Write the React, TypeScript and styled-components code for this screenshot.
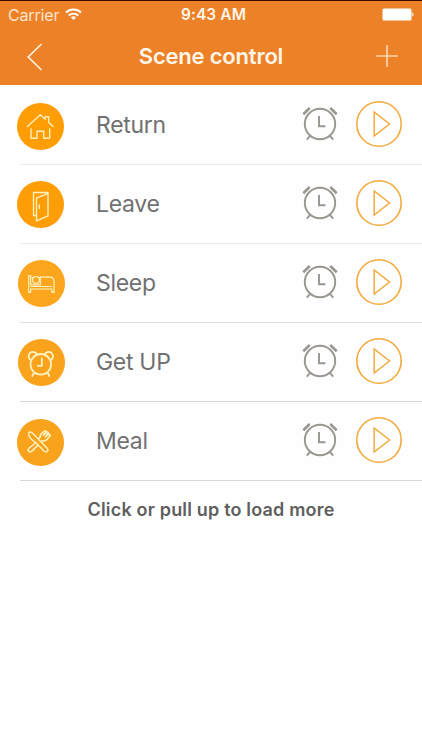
import React from 'react';
import styled, { createGlobalStyle } from 'styled-components';

const GlobalStyle = createGlobalStyle`
  * { box-sizing: border-box; }
  body { margin: 0; background: #fefefe; font-family: Inter, "Liberation Sans", sans-serif; }
  svg { display: block; flex: none; }
`;

const Screen = styled.main`
  width: 422px;
  height: 750px;
  overflow: hidden;
  background: #fefefe;
`;

const Header = styled.header`
  height: 85px;
  background: #ed8127;
  border-top: 1px solid #3a0708;
  color: #fff6ea;
`;

const StatusBar = styled.div`
  display: grid;
  grid-template-columns: 1fr auto 1fr;
  align-items: center;
  height: 27px;
  padding: 0 8px;
`;

const Carrier = styled.div`
  display: flex;
  align-items: center;
  gap: 6px;
  font-size: 16px;
  line-height: 20px;
  letter-spacing: -0.15px;
  color: #ffe6cb;
`;

const Clock = styled.time`
  padding-left: 5px;
  font-size: 15.5px;
  line-height: 20px;
  font-weight: 600;
  letter-spacing: 0.1px;
`;

const BatterySlot = styled.div`
  display: flex;
  justify-content: flex-end;
`;

const NavBar = styled.nav`
  display: grid;
  grid-template-columns: 60px 1fr 60px;
  align-items: center;
  height: 57px;
`;

const NavButton = styled.button<{ $side: 'left' | 'right' }>`
  display: flex;
  justify-content: ${(p) => (p.$side === 'left' ? 'flex-start' : 'flex-end')};
  padding: ${(p) => (p.$side === 'left' ? '0 0 0 26px' : '0 24px 2px 0')};
  border: 0;
  background: none;
  color: #fff3e0;
`;

const Title = styled.h1`
  margin: 0;
  padding-bottom: 1px;
  text-align: center;
  font-size: 22px;
  line-height: 28px;
  font-weight: 600;
  letter-spacing: -0.2px;
`;

const SceneList = styled.ul`
  margin: 0;
  padding: 1px 0 0;
  list-style: none;
`;

const SceneRow = styled.li<{ $line: string }>`
  display: flex;
  align-items: center;
  height: 79px;
  margin-left: 20px;
  padding: 0 20.5px 2px 0;
  border-bottom: 1px solid ${(p) => p.$line};
`;

const BadgeSlot = styled.div`
  display: flex;
  align-self: flex-start;
  flex: none;
  width: 76px;
`;

const Badge = styled.div<{ $color: string; $left: number; $top: number }>`
  display: grid;
  place-items: center;
  width: 46.6px;
  height: 46.6px;
  margin: ${(p) => p.$top}px 0 0 ${(p) => p.$left}px;
  border-radius: 50%;
  background: ${(p) => p.$color};
`;

const SceneName = styled.span`
  flex: 1;
  padding-top: 2px;
  font-size: 23px;
  line-height: 28px;
  letter-spacing: -0.3px;
  color: #717171;
`;

const IconButton = styled.button<{ $color: string }>`
  padding: 0;
  border: 0;
  background: none;
  color: ${(p) => p.$color};
`;

const Actions = styled.div`
  display: flex;
  align-items: center;
  gap: 18px;
`;

const LoadMore = styled.p`
  margin: 17px 0 0;
  text-align: center;
  font-size: 18px;
  line-height: 24px;
  font-weight: 600;
  letter-spacing: 0.18px;
  color: #5f5f5f;
`;

const WifiIcon = () => (
  <svg width="17" height="13" viewBox="0 0 17 13" fill="none" stroke="#fff" strokeWidth="2">
    <path d="M1 4.500C5.200.500 11.800.500 16 4.500" />
    <path d="M3.700 7.500C6.500 5 10.500 5 13.300 7.500" />
    <path d="M8.500 12 5.900 9.300c1.500-1.300 3.700-1.300 5.200 0z" fill="#fff" stroke="none" />
  </svg>
);

const BatteryIcon = () => (
  <svg width="32" height="13" viewBox="0 0 32 13" fill="#fff">
    <rect x="0.500" y="0.500" width="29" height="12" rx="1.500" />
    <path d="M30.300 4.500c1.800.700 1.800 3.300 0 4z" />
  </svg>
);

const BackIcon = () => (
  <svg width="17" height="28" viewBox="0 0 17 28" fill="none" stroke="currentColor" strokeWidth="1.700">
    <path d="M15.500 1 2.200 14l13.300 13" />
  </svg>
);

const PlusIcon = () => (
  <svg width="22" height="22" viewBox="0 0 22 22" fill="none" stroke="currentColor" strokeWidth="1.200">
    <path d="M11 0v22M0 11h22" />
  </svg>
);

const AlarmIcon = () => (
  <svg width="36" height="36" viewBox="0 0 36 36" fill="none" stroke="currentColor" strokeWidth="1.900">
    <circle cx="18" cy="18" r="15.200" />
    <path d="M17 10v10.200h6.400M8.300 29.700l-3.500 4M27.700 29.700l3.500 4" />
    <path d="M1.300 8.200 7.700 2M34.700 8.200 28.300 2" strokeWidth="2.600" />
  </svg>
);

const PlayIcon = () => (
  <svg width="46" height="46" viewBox="0 0 46 46" fill="none" stroke="currentColor" strokeWidth="1.600">
    <circle cx="23" cy="23" r="22.200" />
    <path d="M18.200 11v24L33.500 23z" strokeWidth="1.500" />
  </svg>
);

const Glyph = styled.svg.attrs({ width: 46.6, height: 46.6, viewBox: '0 0 46.6 46.6', fill: 'none' })<{ $weight?: number }>`
  stroke: #fff2bf;
  stroke-width: ${(p) => p.$weight ?? 1.35};
  stroke-linejoin: round;
  stroke-linecap: round;
`;

const HouseGlyph = () => (
  <Glyph>
    <path d="M10.500 23.500 23.300 11.800l4.900 4.500v-2.500h3.500v5.700l4.300 4M14 26v9.300h6v-7h6.700v7h6V26" />
  </Glyph>
);

const DoorGlyph = () => (
  <Glyph>
    <path d="M19.500 34.500h-3V11.500H31M19.500 17.200 31 12.300v22.500l-11.500 5z" />
    <path d="M22.300 24v3.500" />
  </Glyph>
);

const BedGlyph = () => (
  <Glyph $weight={1.2}>
    <path d="M10.700 15.500h2v9.300h9.600v-7.600h9.200c3 0 4.600 1.700 4.600 4.800v10.300h-2.300v-3.300H12.700v3.300h-2z" />
    <path d="M12.700 26.500h21M14 17.500h1M21.500 17.300h1" />
    <circle cx="18" cy="20" r="3.400" />
  </Glyph>
);

const ClockGlyph = () => (
  <Glyph $weight={1.8}>
    <circle cx="22.800" cy="25.300" r="10.300" />
    <path d="M23.800 19.500v7.300h-4M15.800 34.300l-1.500 2.700M29.800 34.300l1.500 2.700" />
    <path d="M12 20.700C8.300 16 14 9.500 18.500 14.700M33.600 20.700C37.300 16 31.600 9.500 27.100 14.700" />
  </Glyph>
);

const MealGlyph = () => (
  <Glyph $weight={1.5}>
    <path d="M12.200 13.200c-1.600 3.200 1.300 7.300 7 10.800l7.500 7.700c2.700 2.500 5.600 0 3.500-2.500L17 15.500c-1.800-1.900-3.400-2.900-4.800-2.300z" />
    <path d="m18.300 24-6.200 5.200c-2.300 2.200.400 5.100 2.700 2.900l6-5.700M21.700 19.600l1.700-1.600c-.5-2 .2-3 1.700-4.200l3.100-2.300 1.200 1.100-3.300 3.500 4.300-3 1.200 1.200-3.500 3.600 4.300-2.800 1 1.300-3.400 4c-1.500 1.500-3 1.900-4.600 1.300l-1 1" />
  </Glyph>
);

const scenes = [
  { name: 'Return', glyph: <HouseGlyph />, color: '#ff9d05', line: '#ebebec', left: -2.9, top: 17 },
  { name: 'Leave', glyph: <DoorGlyph />, color: '#ff9d07', line: '#ebebec', left: -2.9, top: 16.2 },
  { name: 'Sleep', glyph: <BedGlyph />, color: '#fba61d', line: '#dfdfe1', left: -2, top: 16 },
  { name: 'Get UP', glyph: <ClockGlyph />, color: '#f9a21c', line: '#d8d8da', left: -2, top: 16.2 },
  { name: 'Meal', glyph: <MealGlyph />, color: '#f9a21c', line: '#d8d8da', left: -2.9, top: 17 },
];

export default function App() {
  return (
    <Screen>
      <GlobalStyle />
      <Header>
        <StatusBar>
          <Carrier>Carrier <WifiIcon /></Carrier>
          <Clock>9:43 AM</Clock>
          <BatterySlot><BatteryIcon /></BatterySlot>
        </StatusBar>
        <NavBar>
          <NavButton $side="left" aria-label="Back"><BackIcon /></NavButton>
          <Title>Scene control</Title>
          <NavButton $side="right" aria-label="Add scene"><PlusIcon /></NavButton>
        </NavBar>
      </Header>
      <SceneList>
        {scenes.map((s) => (
          <SceneRow key={s.name} $line={s.line}>
            <BadgeSlot>
              <Badge $color={s.color} $left={s.left} $top={s.top}>{s.glyph}</Badge>
            </BadgeSlot>
            <SceneName>{s.name}</SceneName>
            <Actions>
              <IconButton $color="#999691" aria-label={`Schedule ${s.name}`}><AlarmIcon /></IconButton>
              <IconButton $color="#f3aa3d" aria-label={`Play ${s.name}`}><PlayIcon /></IconButton>
            </Actions>
          </SceneRow>
        ))}
      </SceneList>
      <LoadMore>Click or pull up to load more</LoadMore>
    </Screen>
  );
}
